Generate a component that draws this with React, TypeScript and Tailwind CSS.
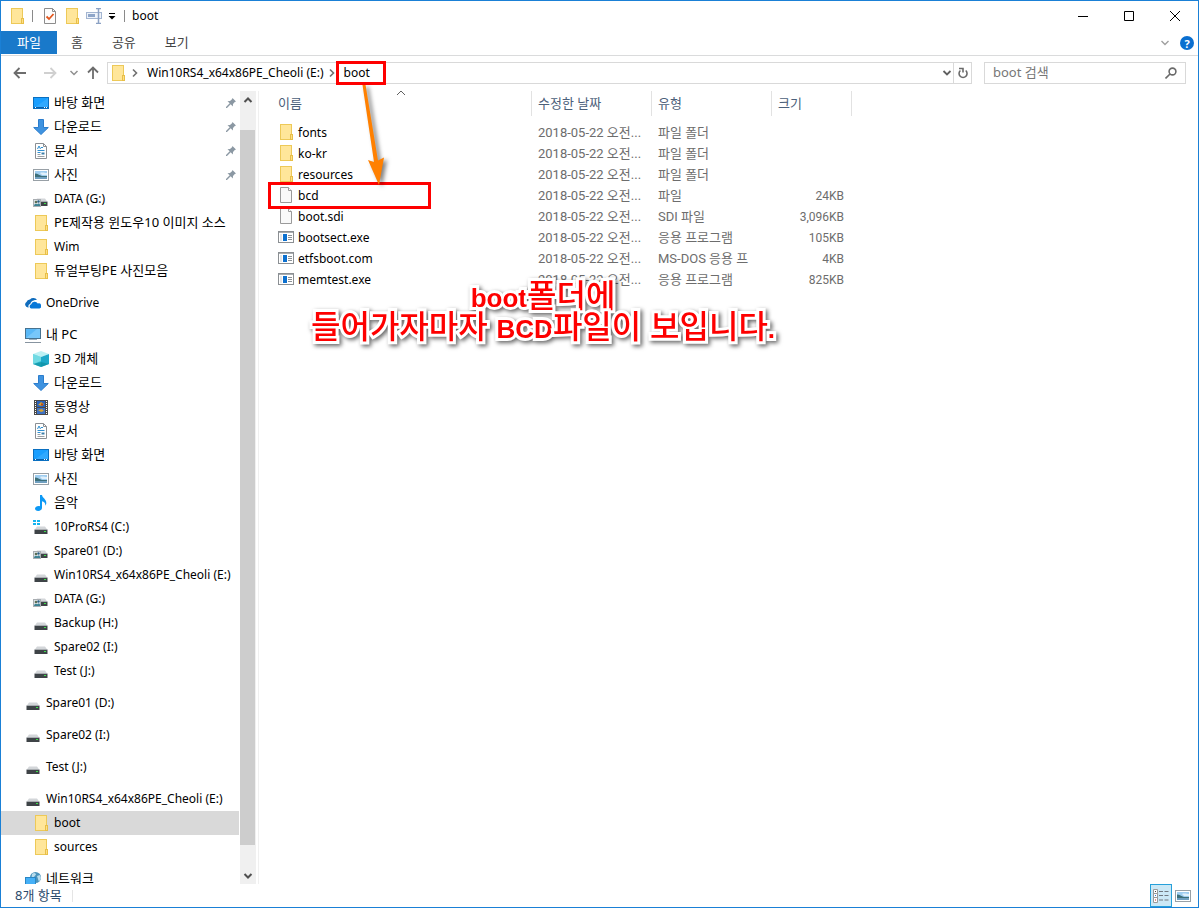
import React from "react";

type IconName =
  | "folder"
  | "desktop"
  | "download"
  | "document"
  | "picture"
  | "drive"
  | "sharedDrive"
  | "systemDrive"
  | "onedrive"
  | "pc"
  | "objects"
  | "video"
  | "music"
  | "network"
  | "file"
  | "app";

type TreeItem = {
  icon: IconName;
  label: string;
  root?: boolean;
  pinned?: boolean;
  selected?: boolean;
};

type FileRow = {
  icon: IconName;
  name: string;
  date: string;
  kind: string;
  size: string;
  marked?: boolean;
};

const treeGroups: TreeItem[][] = [
  [
    { icon: "desktop", label: "바탕 화면", pinned: true },
    { icon: "download", label: "다운로드", pinned: true },
    { icon: "document", label: "문서", pinned: true },
    { icon: "picture", label: "사진", pinned: true },
    { icon: "sharedDrive", label: "DATA (G:)" },
    { icon: "folder", label: "PE제작용 윈도우10 이미지 소스" },
    { icon: "folder", label: "Wim" },
    { icon: "folder", label: "듀얼부팅PE 사진모음" },
  ],
  [{ icon: "onedrive", label: "OneDrive", root: true }],
  [
    { icon: "pc", label: "내 PC", root: true },
    { icon: "objects", label: "3D 개체" },
    { icon: "download", label: "다운로드" },
    { icon: "video", label: "동영상" },
    { icon: "document", label: "문서" },
    { icon: "desktop", label: "바탕 화면" },
    { icon: "picture", label: "사진" },
    { icon: "music", label: "음악" },
    { icon: "systemDrive", label: "10ProRS4 (C:)" },
    { icon: "sharedDrive", label: "Spare01 (D:)" },
    { icon: "drive", label: "Win10RS4_x64x86PE_Cheoli (E:)" },
    { icon: "sharedDrive", label: "DATA (G:)" },
    { icon: "drive", label: "Backup (H:)" },
    { icon: "drive", label: "Spare02 (I:)" },
    { icon: "drive", label: "Test (J:)" },
  ],
  [{ icon: "drive", label: "Spare01 (D:)", root: true }],
  [{ icon: "drive", label: "Spare02 (I:)", root: true }],
  [{ icon: "drive", label: "Test (J:)", root: true }],
  [
    { icon: "drive", label: "Win10RS4_x64x86PE_Cheoli (E:)", root: true },
    { icon: "folder", label: "boot", selected: true },
    { icon: "folder", label: "sources" },
  ],
  [{ icon: "network", label: "네트워크", root: true }],
];

const files: FileRow[] = [
  { icon: "folder", name: "fonts", date: "2018-05-22 오전...", kind: "파일 폴더", size: "" },
  { icon: "folder", name: "ko-kr", date: "2018-05-22 오전...", kind: "파일 폴더", size: "" },
  { icon: "folder", name: "resources", date: "2018-05-22 오전...", kind: "파일 폴더", size: "" },
  { icon: "file", name: "bcd", date: "2018-05-22 오전...", kind: "파일", size: "24KB", marked: true },
  { icon: "file", name: "boot.sdi", date: "2018-05-22 오전...", kind: "SDI 파일", size: "3,096KB" },
  { icon: "app", name: "bootsect.exe", date: "2018-05-22 오전...", kind: "응용 프로그램", size: "105KB" },
  { icon: "app", name: "etfsboot.com", date: "2018-05-22 오전...", kind: "MS-DOS 응용 프", size: "4KB" },
  { icon: "app", name: "memtest.exe", date: "2018-05-22 오전...", kind: "응용 프로그램", size: "825KB" },
];

// 한글은 13px, 영문만 있는 이름은 12px
const labelSize = (label: string) => (/[가-힣]/.test(label) ? "pb-[2px] text-[13px]" : "text-[12px]");

function DriveBody() {
  return (
    <>
      <path d="M4 7.500h8l2.500 3.500h-13z" fill="#d3d6d9" />
      <rect x="1.500" y="11" width="13" height="4" fill="#3e4347" />
      <rect x="1.500" y="10" width="13" height="1" fill="#a9adb1" />
      <rect x="11" y="12" width="2" height="1" fill="#3ce04a" />
    </>
  );
}

const glyphs: Record<IconName, React.ReactNode> = {
  folder: (
    <>
      <rect x="2.500" y="0.500" width="11" height="15" fill="#ffe69a" stroke="#edc958" />
      <rect x="12.500" y="10.500" width="2" height="5" fill="#ffdf84" stroke="#e8bf48" />
    </>
  ),
  desktop: (
    <>
      <rect x="0.500" y="2.500" width="15" height="11" fill="#1a9fff" stroke="#0a6fc0" />
      <path d="M1 13 15 3v9H1z" fill="#46b4ff" opacity=".5" />
      <path d="M1 12.500h14" stroke="#0a5fa8" />
      <path d="M2 12.500h1M11 12.500h1M13 12.500h1" stroke="#fff" />
    </>
  ),
  download: (
    <path d="M5.500.5h5v8h4.800L8 15.500.7 8.500h4.800z" fill="#3f93e0" stroke="#2b7dcd" />
  ),
  document: (
    <>
      <path d="M2.500.5h8l3 3v12h-11z" fill="#fff" stroke="#8a8f94" />
      <path d="M10.500.5v3h3" fill="none" stroke="#8a8f94" />
      <path d="M4.500 6 6 3l1.500 3M8 4.500h2M4.500 7.500h7M4.500 9.500h3" fill="none" stroke="#2f8fd0" />
      <path d="M8.500 9.500h3v2h-3z" fill="#3c7ea8" />
      <path d="M4.500 11.500h3M4.500 13.500h7" stroke="#9aa0a5" />
    </>
  ),
  picture: (
    <>
      <rect x="0.500" y="2.500" width="15" height="11" fill="#fff" stroke="#98a0a6" />
      <rect x="2" y="4" width="12" height="8" fill="#9fcdf0" />
      <path d="M2 6.500c3 0 4 1.500 7 2.500h5v3H2z" fill="#3d6f79" />
      <rect x="2" y="10" width="12" height="2" fill="#6f9fc0" />
      <path d="M7 6c2-1 5 0 7 0v2H9z" fill="#dff0fb" />
    </>
  ),
  drive: <DriveBody />,
  sharedDrive: (
    <>
      <DriveBody />
      <rect x="0.500" y="8.500" width="7" height="7" fill="#dfe4e8" stroke="#a9aeb2" />
      <circle cx="3" cy="11" r="1.300" fill="#5c6f55" />
      <circle cx="5.500" cy="10.500" r="1.200" fill="#2b5f86" />
      <path d="M1 15c.3-3 3.500-3 4 0zM4 14c.5-2 3-2 3 0v1H4z" fill="#3c8294" />
    </>
  ),
  systemDrive: (
    <>
      <DriveBody />
      <path d="M0 1h3v2H0zM4 1h3v2H4zM0 4h3v2H0zM4 4h3v2H4z" fill="#15b4ef" />
    </>
  ),
  onedrive: (
    <>
      <path d="M3 12.500A3 3 0 0 1 1.500 7 3.500 3.500 0 0 1 5 4.500 4.500 4.500 0 0 1 12 5C8 4.500 5.500 7 5.300 9 3.500 9.300 3 11 3.700 12.500z" fill="#0f6cbd" />
      <path d="M6 13.500a2.300 2.300 0 0 1 .2-4.300 3.600 3.600 0 0 1 6.600-.7 2.600 2.600 0 0 1 1.700 5z" fill="#0878d8" />
    </>
  ),
  pc: (
    <>
      <rect x="0.500" y="1.500" width="15" height="10" fill="#59b8f7" stroke="#47728f" />
      <path d="M1 11 12 2h3v9z" fill="#85cdfb" opacity=".7" />
      <path d="M4 12.500h8" stroke="#9bb0bf" />
      <path d="M0 15.500h16" stroke="#8794a0" />
    </>
  ),
  objects: (
    <>
      <path d="M0 3 8 0l8 3-8 3z" fill="#bdf1f4" />
      <path d="M0 3l8 3v10l-8-3z" fill="#35c0d4" />
      <path d="M16 3 8 6v10l8-3z" fill="#1fa9c9" />
      <path d="m8 11 8 2-8 3-8-3z" fill="#0b8f9f" opacity=".7" />
      <path d="M0 3 8 6v4l-8 3z" fill="#8be6ea" opacity=".7" />
    </>
  ),
  video: (
    <>
      <rect x="1" y="1" width="14" height="15" fill="#4a4a4a" />
      <rect x="4" y="2" width="8" height="6" fill="#2a62ba" />
      <rect x="4" y="9" width="8" height="6" fill="#3e72c4" />
      <path d="M5 6 8 3l3 2-2 2zM5 11l4-1 2 2-3 1z" fill="#d8a431" />
      <path d="M8 4.500h2v2H8z" fill="#b8471e" />
      <path d="M2.500 2v14M13.500 2v14" stroke="#fff" strokeDasharray="1 1" />
    </>
  ),
  music: (
    <path d="M7 0h2c.3 3 4.700 4 4.300 8.500-.2 1-.6 1.700-1.100 2.200.5-2.500-.8-4-3.200-4.500V13c0 1.600-1.800 3-3.800 3S2 15 2 13.600s1.600-2.700 3.600-2.700c.5 0 1 .1 1.400.3z" fill="#0d99f5" />
  ),
  network: (
    <>
      <circle cx="10.500" cy="6.500" r="5.500" fill="#4b93bb" />
      <path d="M7 3c2-2 4-1 4 .500L9 6 6.500 7zM12 5l3-1 1 3-2 4z" fill="#b9dcec" />
      <rect x="0.500" y="6.500" width="10" height="7" fill="#45b0f7" stroke="#2a86c4" />
      <path d="M3 15.500h6" stroke="#8fa3b0" />
    </>
  ),
  file: (
    <>
      <path d="M2.500.5h8l3 3v12h-11z" fill="#f9f9f9" stroke="#9a9a9a" />
      <path d="M10.500.5v3h3" fill="#fff" stroke="#9a9a9a" />
    </>
  ),
  app: (
    <>
      <rect x="0.500" y="2.500" width="15" height="11" fill="#fff" stroke="#8b8f93" />
      <path d="M1 3.500h14" stroke="#a9adb0" />
      <rect x="2" y="5" width="2" height="7" fill="#e4e6e8" />
      <rect x="5" y="5" width="4" height="7" fill="#0c70cf" />
      <path d="M10 6.500h4M10 8.500h4M10 10.500h4" stroke="#8b9196" />
    </>
  ),
};

function Glyph({ name }: { name: IconName }) {
  return (
    <svg viewBox="0 0 16 16" className="size-4 shrink-0" aria-hidden="true">
      {glyphs[name]}
    </svg>
  );
}

function Chevron({ className, d = "m1.500 3 3.500 3.500L8.500 3" }: { className: string; d?: string }) {
  return (
    <svg viewBox="0 0 10 10" className={`size-[10px] shrink-0 ${className}`} fill="none" stroke="currentColor" aria-hidden="true">
      <path d={d} />
    </svg>
  );
}

function TitleBar() {
  return (
    <header className="flex h-[30px] items-center">
      <div className="flex items-center pl-2">
        <Glyph name="folder" />
        <span className="ml-[7px] h-3 w-px bg-[#8a8a8a]" />
        <button type="button" aria-label="속성" className="ml-[9px] flex">
          <svg viewBox="0 0 16 16" className="size-4">
            <path d="M2.500.5h8l3 3v12h-11z" fill="#fdfdfd" stroke="#8c8c8c" />
            <path d="M10.500.5v3h3" fill="none" stroke="#8c8c8c" />
            <path d="m4.500 8.500 2.500 2.500 4.500-5" fill="none" stroke="#e2571f" strokeWidth="1.800" />
          </svg>
        </button>
        <button type="button" aria-label="새 폴더" className="ml-[6px] flex">
          <Glyph name="folder" />
        </button>
        <button type="button" aria-label="이름 바꾸기" className="ml-[6px] flex">
          <svg viewBox="0 0 16 16" className="size-4" fill="none" stroke="#a3b5d1">
            <rect x="0.500" y="4.500" width="15" height="6" fill="#eef3fa" />
            <rect x="2" y="6" width="7" height="3" fill="#8fa6c9" stroke="none" />
            <path d="M12.500 1v14M10 .5h5M10 15.500h5" stroke="#8ba1c4" strokeWidth="1.500" />
          </svg>
        </button>
        <button type="button" aria-label="빠른 실행 도구 모음" className="ml-[6px] flex">
          <svg viewBox="0 0 8 8" className="size-2">
            <path d="M1 1.500h6" stroke="#000" />
            <path d="M.5 4h7L4 7.500z" fill="#000" />
          </svg>
        </button>
        <span className="ml-2 h-3 w-px bg-[#8a8a8a]" />
        <h1 className="ml-[7px] text-[12px]">boot</h1>
      </div>
      <div className="ml-auto flex h-full">
        <button type="button" aria-label="최소화" className="flex w-[46px] items-center justify-center">
          <svg viewBox="0 0 10 10" className="size-[10px]">
            <path d="M0 5.500h10" stroke="#000" />
          </svg>
        </button>
        <button type="button" aria-label="최대화" className="flex w-[46px] items-center justify-center">
          <svg viewBox="0 0 10 10" className="size-[10px]">
            <path d="M.5.5h9v9h-9z" fill="none" stroke="#000" />
          </svg>
        </button>
        <button type="button" aria-label="닫기" className="flex w-[46px] items-center justify-center">
          <svg viewBox="0 0 10 10" className="size-[10px]">
            <path d="m0 0 10 10M10 0 0 10" stroke="#000" />
          </svg>
        </button>
      </div>
    </header>
  );
}

function RibbonTabs() {
  return (
    <nav className="flex h-[25px] items-start border-b border-[#dadbdc] text-[#444]">
      <button type="button" className="h-[23px] bg-[#1979ca] px-4 pb-[2px] text-white">
        파일
      </button>
      <div className="flex gap-px">
        {["홈", "공유", "보기"].map((tab) => (
          <button type="button" key={tab} className="h-[23px] px-[14px] pb-[2px]">
            {tab}
          </button>
        ))}
      </div>
      <div className="ml-auto flex h-6 items-center gap-[10px] pr-1">
        <Chevron className="stroke-[1.4] text-[#a0a0a0]" />
        <button
          type="button"
          aria-label="도움말"
          className="flex size-[14px] items-center justify-center rounded-full bg-[#0a6fd0] text-[11px] leading-none font-bold text-white"
        >
          ?
        </button>
      </div>
    </nav>
  );
}

function AddressBar() {
  return (
    <div className="flex h-[35px] items-center pr-3 pb-px pl-3">
      <button type="button" aria-label="뒤로" className="flex text-[#6d6d6d]">
        <svg viewBox="0 0 14 12" className="h-3 w-[14px]" fill="none" stroke="currentColor" strokeWidth="1.800">
          <path d="M13 6H1.500M6.500 1l-5 5 5 5" />
        </svg>
      </button>
      <button type="button" aria-label="앞으로" className="ml-4 flex text-[#d0d0d0]">
        <svg viewBox="0 0 14 12" className="h-3 w-[14px]" fill="none" stroke="currentColor" strokeWidth="1.800">
          <path d="M1 6h11.500M7.500 1l5 5-5 5" />
        </svg>
      </button>
      <button type="button" aria-label="최근 위치" className="ml-3 flex">
        <Chevron className="stroke-[1.5] text-[#909090]" />
      </button>
      <button type="button" aria-label="위로" className="ml-2 flex text-[#6d6d6d]">
        <svg viewBox="0 0 12 14" className="h-[14px] w-3" fill="none" stroke="currentColor" strokeWidth="1.800">
          <path d="M6 13V1.500M1 6.500l5-5 5 5" />
        </svg>
      </button>

      <div className="ml-2 flex h-[22px] min-w-0 flex-1 items-center border border-[#d9d9d9] pl-[2px] text-[12px]">
        <Glyph name="folder" />
        <Chevron className="ml-1 stroke-[1.6] text-[#707070]" d="m3 1.500 3.500 3.500L3 8.500" />
        <a href="#drive" className="ml-[7px] whitespace-nowrap">
          Win10RS4_x64x86PE_Cheoli (E:)
        </a>
        <Chevron className="ml-[3px] stroke-[1.6] text-[#707070]" d="m3 1.500 3.500 3.500L3 8.500" />
        <a href="#boot" className="relative ml-[7px]">
          boot
          <span className="absolute -top-[2px] -left-2 h-6 w-[50px] border-[3px] border-[#fe0000]" />
        </a>
        <button type="button" aria-label="이전 위치" className="mr-[1px] ml-auto flex">
          <Chevron className="stroke-[1.8] text-[#606060]" />
        </button>
        <button type="button" aria-label="새로 고침" className="flex h-full w-[18px] items-center justify-center border-l border-[#d9d9d9]">
          <svg viewBox="0 0 12 12" className="size-3" fill="none" stroke="#6a6a6a" strokeWidth="1.600">
            <path d="M8.700 3.500A4 4 0 1 1 3.400 3.500" />
            <path d="M2 1.500h4v4" />
          </svg>
        </button>
      </div>

      <label className="ml-3 flex h-[22px] w-[202px] items-center border border-[#d9d9d9] px-2">
        <input
          type="search"
          aria-label="boot 검색"
          placeholder="boot 검색"
          className="min-w-0 flex-1 pb-[2px] outline-none placeholder:text-[#777]"
        />
        <svg viewBox="0 0 12 12" className="size-3" fill="none" stroke="#6a6a6a" strokeWidth="1.600">
          <circle cx="7.500" cy="4.500" r="3.400" />
          <path d="m5 7-4.500 4.500" />
        </svg>
      </label>
    </div>
  );
}

function Sidebar() {
  return (
    <aside className="flex w-[258px] shrink-0 border-r border-[#f0f0f0]">
      <div className="w-[238px] space-y-2 overflow-hidden">
        {treeGroups.map((group, index) => (
          <ul key={`group-${index}`}>
            {group.map((item) => (
              <li key={item.label}>
                <a
                  href="#tree"
                  className={`flex h-6 items-center gap-[5px] pr-[3px] whitespace-nowrap ${item.root ? "pl-6" : "pl-8"} ${
                    item.selected ? "bg-[#d9d9d9]" : ""
                  }`}
                >
                  <Glyph name={item.icon} />
                  <span className={labelSize(item.label)}>{item.label}</span>
                  {item.pinned && (
                    <svg viewBox="0 0 10 10" className="ml-auto size-[10px]" fill="#8b98a3" aria-hidden="true">
                      <path d="M6.500 0 10 3.500 8.800 4 7 6l-.2 2.500L4.700 6.300 1 10H0V9l3.700-3.700L1.500 3.200 4 3l2-1.800z" />
                    </svg>
                  )}
                </a>
              </li>
            ))}
          </ul>
        ))}
      </div>
      <div className="ml-px flex w-4 flex-col bg-[#f0f0f0]">
        <button type="button" aria-label="위로 스크롤" className="flex h-[17px] items-center justify-center">
          <Chevron className="stroke-2 text-[#505050]" d="m1.500 7 3.500-3.500L8.500 7" />
        </button>
        <div className="grow-[22]" />
        <div className="mr-px grow-[715] bg-[#cdcdcd]" />
        <div className="grow-[22]" />
        <button type="button" aria-label="아래로 스크롤" className="flex h-[17px] items-center justify-center">
          <Chevron className="stroke-2 text-[#505050]" />
        </button>
      </div>
    </aside>
  );
}

function FileTable() {
  return (
    <table className="w-[593px] table-fixed border-collapse">
      <colgroup>
        <col className="w-[273px]" />
        <col className="w-[120px]" />
        <col className="w-[120px]" />
        <col className="w-[80px]" />
      </colgroup>
      <thead>
        <tr className="h-[31px] text-left align-top text-[#4c607a]">
          {["이름", "수정한 날짜", "유형", "크기"].map((title, index) => (
            <th key={title} scope="col" className="p-0 font-normal">
              <div
                className={`relative flex h-[25px] items-center border-r border-[#e2e2e2] pb-[2px] ${
                  index === 0 ? "pl-[19px]" : "pl-[6px]"
                }`}
              >
                {title}
                {index === 0 && (
                  <Chevron className="absolute -top-[3px] left-[137px] text-[#606060]" d="m1 7 4-4 4 4" />
                )}
              </div>
            </th>
          ))}
        </tr>
      </thead>
      <tbody className="font-['Roboto','Noto_Sans_CJK_KR',sans-serif]">
        {files.map((file) => (
          <tr key={file.name} className="h-[21px] text-[#6d6d6d]">
            <td className="relative p-0 pl-[19px] align-top font-['Noto_Sans',sans-serif] text-[12px] text-black">
              <div className="flex items-center gap-1">
                <Glyph name={file.icon} />
                <span className="pt-[2px] leading-[18px]">{file.name}</span>
              </div>
              {/* 강조 표시 */}
              {file.marked && (
                <span className="absolute -inset-y-[3px] left-[9px] z-10 w-[163px] border-[3px] border-[#fe0000]" />
              )}
            </td>
            <td className="overflow-hidden p-0 pl-[6px] whitespace-nowrap">{file.date}</td>
            <td className="overflow-hidden p-0 pl-[6px] whitespace-nowrap">{file.kind}</td>
            <td className="p-0 pr-2 text-right text-[12px]">{file.size}</td>
          </tr>
        ))}
      </tbody>
    </table>
  );
}

function Annotations() {
  return (
    <>
      <svg viewBox="0 0 40 110" className="pointer-events-none absolute -top-[6px] left-[95px] z-20 h-[110px] w-10 drop-shadow-[3px_2px_2px_rgba(0,0,0,0.5)]">
        <path d="m8.500 0 3-.500 12.500 76 6-3L25 100 14 75l6 2z" fill="#ff8000" />
      </svg>
      <p className="absolute top-[191px] left-[52px] z-20 text-center font-['Liberation_Sans','Noto_Sans_CJK_KR',sans-serif] text-[26px] leading-[29px] font-bold whitespace-nowrap text-[#fe0000] drop-shadow-[2px_2px_2px_rgba(0,0,0,0.6)] [-webkit-text-stroke:6px_white] [paint-order:stroke]">
        boot<span className="text-[32px] font-medium">폴더에</span>
        <br />
        <span className="text-[32px] font-medium">들어가자마자 </span>BCD
        <span className="text-[32px] font-medium">파일이 보입니다</span>.
      </p>
    </>
  );
}

function StatusBar() {
  return (
    <footer className="flex h-[23px] items-center pl-[14px] text-[#2b4a6b]">
      <span className="pb-[2px]">8개 항목</span>
      <span className="ml-[10px] h-3 w-px bg-[#e5e5e5]" />
      <div className="ml-auto flex h-full items-center pr-[7px]">
        <button type="button" aria-label="자세히" className="flex h-full w-[22px] items-center justify-center border border-[#26a0da] bg-[#cbe8f6]">
          <svg viewBox="0 0 16 14" className="h-[14px] w-4">
            <path d="M.5.500h4v4h-4zM.5 4.500h4v4h-4zM.5 8.500h4v5h-4z" fill="#fff" stroke="#9a9a9a" />
            <path d="M2 2.500h1" stroke="#444" />
            <path d="M2 6.500h1" stroke="#2a7de1" />
            <path d="M2 11h1" stroke="#d0201a" />
            <path d="M6 2.500h4M11.500 2.500h4M6 6.500h4M11.500 6.500h4M6 11h4M11.500 11h4" stroke="#707880" />
          </svg>
        </button>
        <button type="button" aria-label="큰 아이콘" className="ml-[3px] flex">
          <Glyph name="picture" />
        </button>
      </div>
    </footer>
  );
}

export default function App() {
  return (
    <div className="flex h-screen flex-col overflow-hidden border border-[#1a80d6] bg-white font-['Noto_Sans','Noto_Sans_CJK_KR',sans-serif] text-[13px] leading-5 text-black">
      <TitleBar />
      <RibbonTabs />
      <AddressBar />
      <div className="flex min-h-0 flex-1">
        <Sidebar />
        <main className="relative min-w-0 flex-1">
          <FileTable />
          <Annotations />
        </main>
      </div>
      <StatusBar />
    </div>
  );
}
